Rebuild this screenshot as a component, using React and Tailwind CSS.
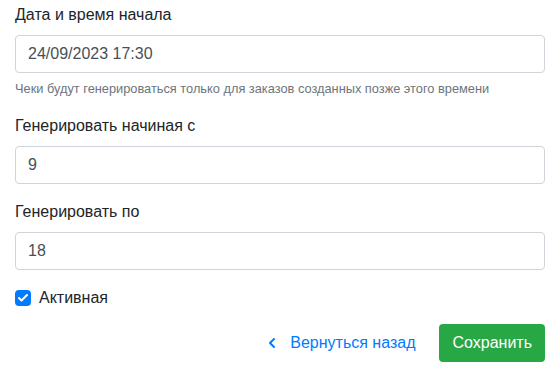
import { Check, ChevronLeft } from 'lucide-react';

const Field = ({ label, value, help }) => (
  <div className="mb-4">
    <label className="block mb-2 text-base leading-6 text-[#212529]">{label}</label>
    <input
      readOnly
      value={value}
      className="block w-full h-[38px] px-3 text-base text-[#495057] bg-white border border-[#ced4da] rounded outline-none"
    />
    {help && <small className="block mt-[6px] mb-[3px] text-[12.8px] leading-[19px] text-[#6c757d]">{help}</small>}
  </div>
);

const App = () => {
  return (
    <div className="min-h-screen bg-white px-[15px] pt-[3px] font-['Liberation_Sans',Arial,sans-serif]">
      <Field
        label="Дата и время начала"
        value="24/09/2023 17:30"
        help="Чеки будут генерироваться только для заказов созданных позже этого времени"
      />
      <Field label="Генерировать начиная с" value="9" />
      <Field label="Генерировать по" value="18" />

      <div className="flex items-center gap-2 mt-[2px] mb-[14px]">
        <span className="w-4 h-4 rounded bg-[#007bff] flex items-center justify-center">
          <Check className="w-3 h-3 text-white" strokeWidth={4} />
        </span>
        <span className="text-base leading-6 text-[#212529]">Активная</span>
      </div>

      <div className="flex items-center justify-end gap-6">
        <button className="flex items-center gap-[10px] text-base text-[#007bff]">
          <ChevronLeft className="w-4 h-4" strokeWidth={3} />
          Вернуться назад
        </button>
        <button className="h-[38px] px-[13px] rounded bg-[#28a745] text-white text-base">Сохранить</button>
      </div>
    </div>
  );
};

export default App;
